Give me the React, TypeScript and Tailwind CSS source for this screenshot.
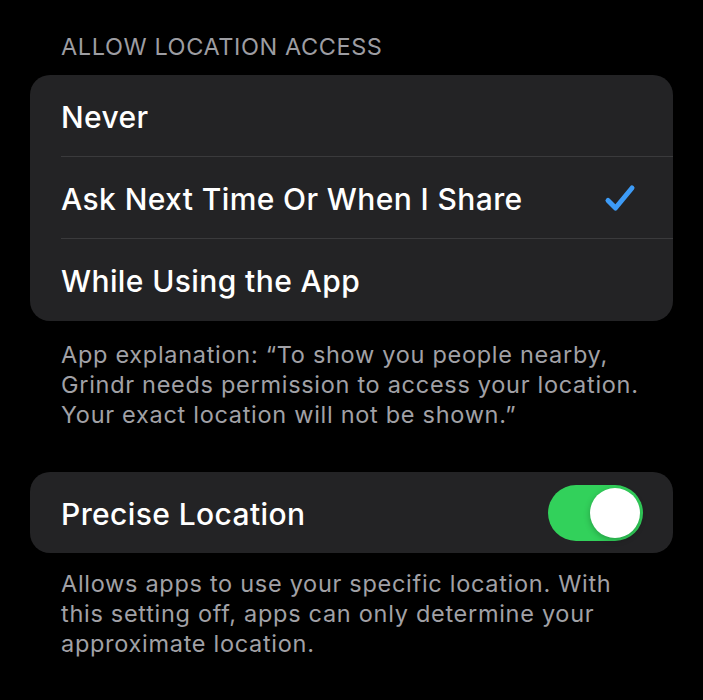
import type { FunctionComponent } from "react";

const options = ["Never", "Ask Next Time Or When I Share", "While Using the App"];
const selected = 1;

const Check: FunctionComponent = () => (
  <svg width="32" height="28" viewBox="0 0 32 28" fill="none">
    <path
      d="M4 16.5 L11.5 24 L28 4"
      stroke="#3d9bf6"
      strokeWidth="5"
      strokeLinecap="round"
      strokeLinejoin="round"
    />
  </svg>
);

const Toggle: FunctionComponent<{ on: boolean }> = ({ on }) => (
  <div
    className={`flex h-[56px] w-[95px] items-center rounded-full p-[3px] ${
      on ? "justify-end bg-[#32d15b]" : "justify-start bg-[#39393d]"
    }`}
  >
    <div className="h-[50px] w-[50px] rounded-full bg-white shadow-[0_2px_6px_rgba(0,0,0,0.25)]" />
  </div>
);

const App: FunctionComponent = () => (
  <main
    className="min-h-[700px] bg-black px-[30px] pt-[33px] text-white"
    style={{ fontFamily: "Inter, 'Noto Sans', sans-serif" }}
  >
    <h2 className="px-[31px] text-[23.5px] leading-[28px] tracking-[0.025em] text-[#9d9da2]">
      ALLOW LOCATION ACCESS
    </h2>
    <section className="mt-[14px] overflow-hidden rounded-[20px] bg-[#232325]">
      {options.map((label, i) => (
        <div key={label} className="pl-[31px]">
          <div
            className={`flex h-[82px] items-center justify-between pr-[37px] ${
              i < options.length - 1 ? "border-b border-[#3a3a3c]" : ""
            }`}
          >
            <span className="pt-[3px] text-[30px] font-medium tracking-[0.013em]">{label}</span>
            {i === selected ? <Check /> : null}
          </div>
        </div>
      ))}
    </section>
    <p className="mt-[19px] px-[31px] text-[23.5px] leading-[30px] tracking-[0.03em] text-[#a1a1a6]">
      App explanation: “To show you people nearby,
      <br />
      Grindr needs permission to access your location.
      <br />
      Your exact location will not be shown.”
    </p>
    <section className="mt-[42px] flex h-[81px] items-center justify-between rounded-[20px] bg-[#232325] pl-[31px] pr-[30px]">
      <span className="pt-[3px] text-[30px] font-medium tracking-[0.013em]">Precise Location</span>
      <Toggle on />
    </section>
    <p className="mt-[16px] px-[31px] text-[23.5px] leading-[30px] tracking-[0.03em] text-[#a1a1a6]">
      Allows apps to use your specific location. With
      <br />
      this setting off, apps can only determine your
      <br />
      approximate location.
    </p>
  </main>
);

export default App;
